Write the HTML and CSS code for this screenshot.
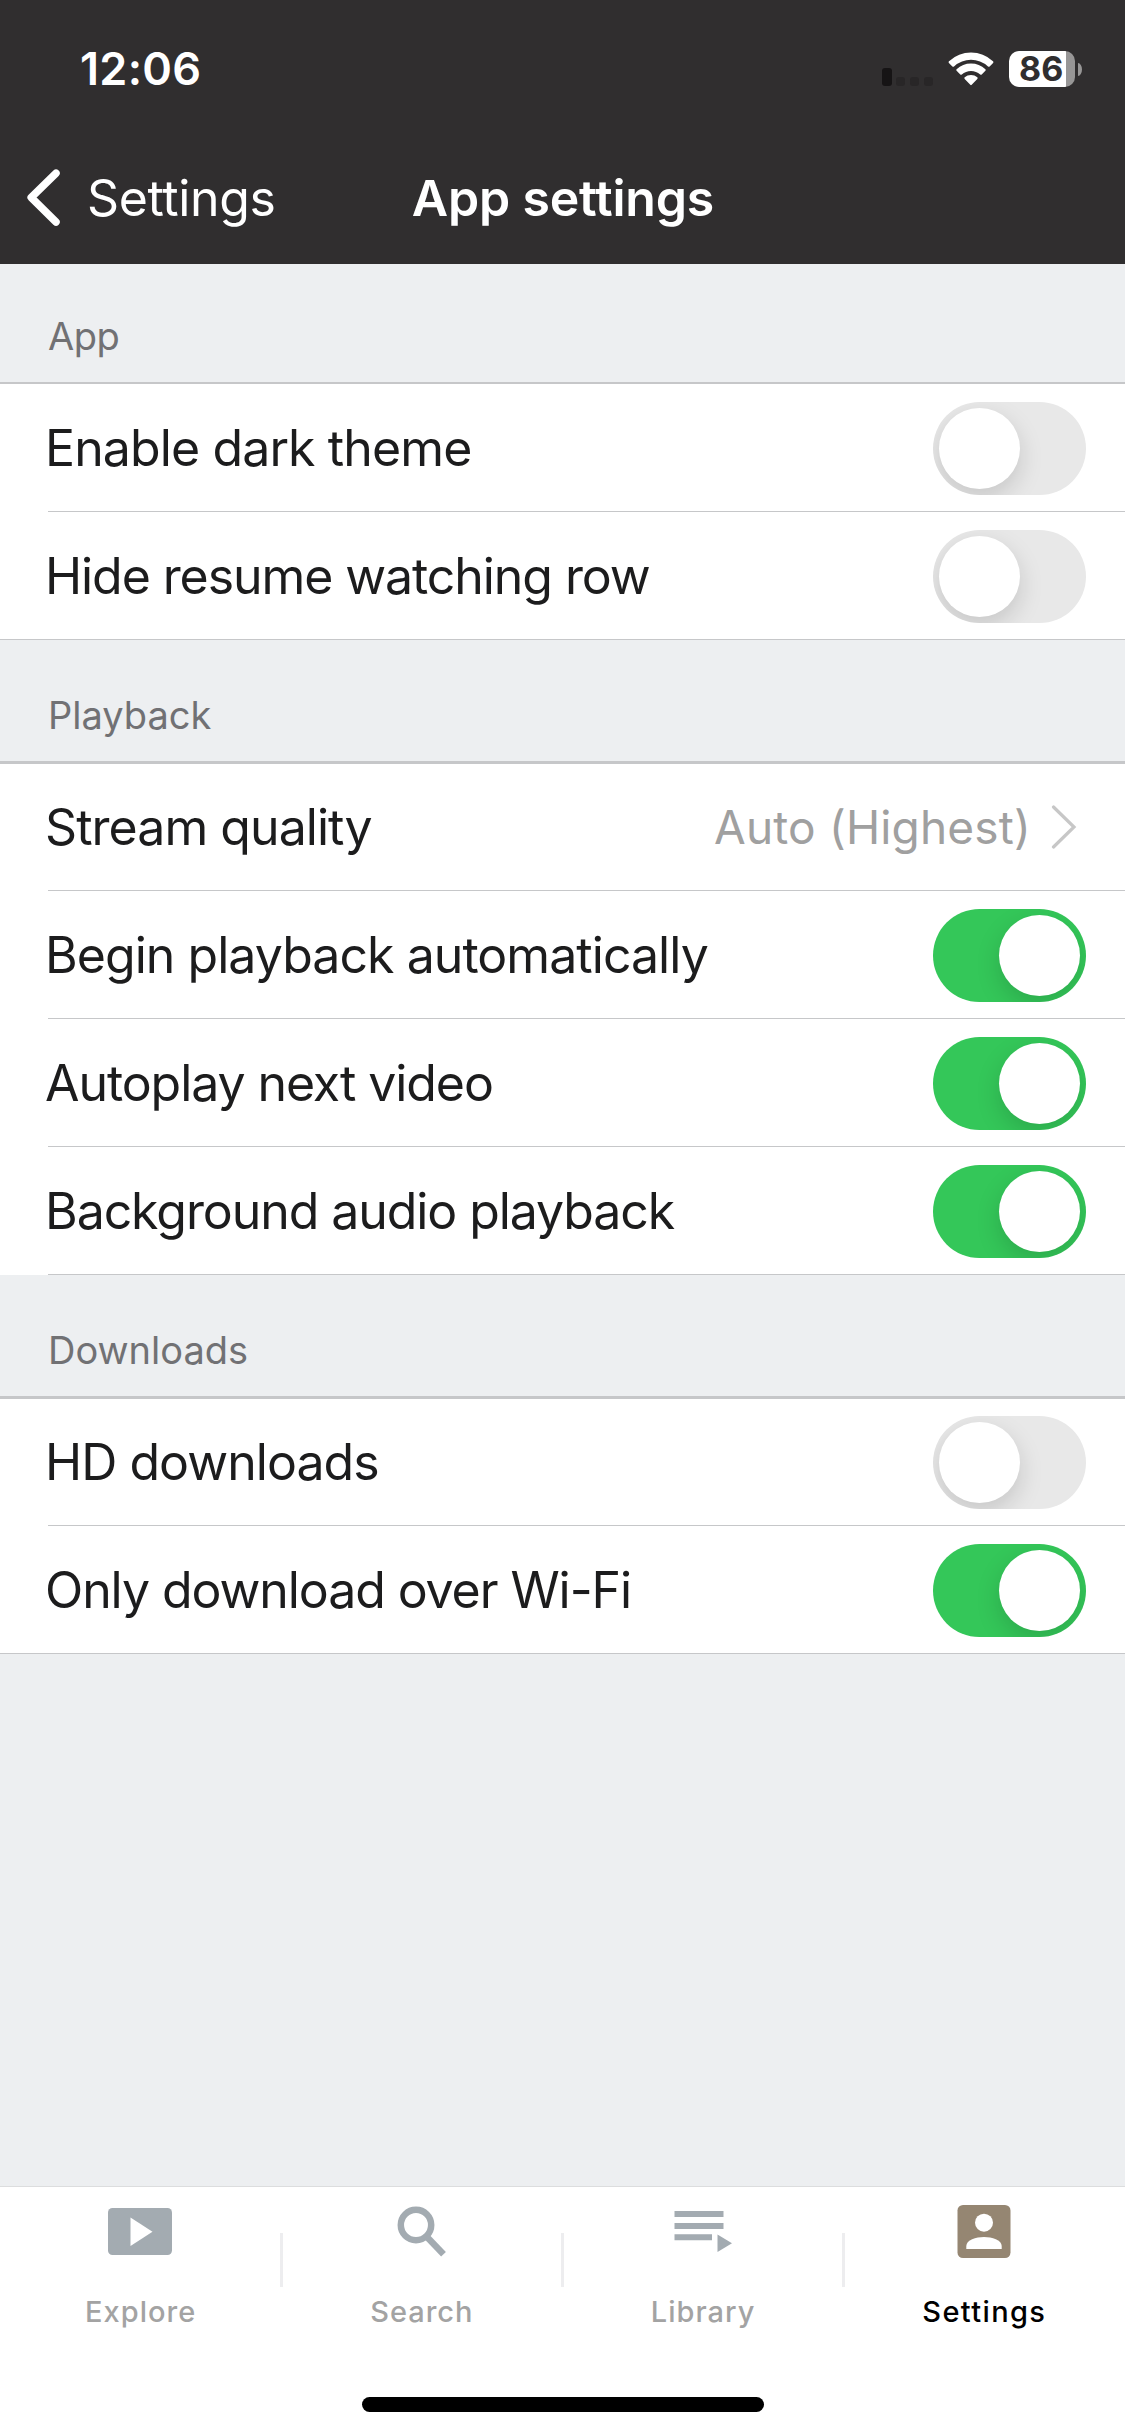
FILE: index.html
```html
<!DOCTYPE html>
<html lang="en">
<head>
<meta charset="utf-8">
<title>App settings</title>
<link rel="stylesheet" href="styles.css">
</head>
<body>
<div class="screen">
  <header class="top">
    <div class="status">
      <time class="clock">12:06</time>
      <div class="indicators">
        <div class="signal"><i class="bar-on"></i><i></i><i></i><i></i></div>
        <svg class="wifi" width="46" height="34" viewBox="0 0 46 34">
          <path fill="#fff" d="M1 9.2Q10.500 0.500 23 0.500Q35.500 0.500 45 9.200Q45.900 10 45.100 10.900L41.600 14.400Q40.800 15.100 40 14.400Q32.500 7.700 23 7.700Q13.500 7.700 6 14.400Q5.200 15.100 4.400 14.400L0.900 10.900Q0.100 10 1 9.200Z"/>
          <path fill="#fff" d="M8.600 17.200Q14.700 11.600 23 11.600Q31.300 11.600 37.400 17.200Q38.200 18 37.400 18.800L33.700 22.500Q33 23.100 32.200 22.500Q28.300 19 23 19Q17.700 19 13.800 22.500Q13 23.100 12.300 22.500L8.600 18.800Q7.800 18 8.600 17.200Z"/>
          <path fill="#fff" d="M16.700 25.300Q19.300 23 23 23Q26.700 23 29.300 25.300Q30.100 26 29.300 26.900L23.700 32.800Q23 33.500 22.300 32.800L16.700 26.900Q15.900 26 16.700 25.300Z"/>
        </svg>
        <div class="battery"><span class="level">86</span></div>
        <span class="nub"></span>
      </div>
    </div>
    <nav class="nav">
      <a class="back">
        <svg width="33" height="57" viewBox="0 0 33 57"><path d="M29 4.200 4.200 28.500 29 53" fill="none" stroke="#fff" stroke-width="7.500" stroke-linecap="round" stroke-linejoin="round"/></svg>
        <span>Settings</span>
      </a>
      <h1 class="title">App settings</h1>
    </nav>
  </header>

  <main class="content">
    <section>
      <h2 class="heading heading-first">App</h2>
      <div class="row"><span class="label roomy">Enable dark theme</span><span class="switch"><i></i></span></div>
      <div class="row last"><span class="label">Hide resume watching row</span><span class="switch"><i></i></span></div>
    </section>
    <section>
      <h2 class="heading">Playback</h2>
      <div class="row"><span class="label loose">Stream quality</span>
        <span class="value">Auto (Highest)
          <svg width="26" height="44" viewBox="0 0 26 44"><path d="M2.500 2 23 22 2.500 42" fill="none" stroke="#c7c7c7" stroke-width="3.200" stroke-linecap="round"/></svg>
        </span>
      </div>
      <div class="row"><span class="label loose">Begin playback automatically</span><span class="switch on"><i></i></span></div>
      <div class="row"><span class="label">Autoplay next video</span><span class="switch on"><i></i></span></div>
      <div class="row"><span class="label">Background audio playback</span><span class="switch on"><i></i></span></div>
    </section>
    <section>
      <h2 class="heading">Downloads</h2>
      <div class="row"><span class="label loose">HD downloads</span><span class="switch"><i></i></span></div>
      <div class="row last"><span class="label">Only download over Wi-Fi</span><span class="switch on"><i></i></span></div>
    </section>
  </main>

  <footer class="tabs">
    <a class="tab">
      <svg class="explore" width="64" height="56" viewBox="0 0 64 56"><rect y="4" width="64" height="47" rx="4.500" fill="#a3abb1"/><path d="M22.500 13.500 44.500 27.700 22.500 42Z" fill="#fff"/></svg>
      <span>Explore</span>
    </a>
    <span class="divider"></span>
    <a class="tab">
      <svg width="50" height="56" viewBox="0 0 50 56"><circle cx="19" cy="21" r="15.200" fill="none" stroke="#a3abb1" stroke-width="6.500"/><path d="M29.500 32.500 46.500 50.300" stroke="#a3abb1" stroke-width="6.600"/></svg>
      <span>Search</span>
    </a>
    <span class="divider"></span>
    <a class="tab">
      <svg width="58" height="56" viewBox="0 0 58 56"><path d="M.5 7h49v6H.5zM.5 19h49v6H.5zM.5 30.300h37.500v6H.5zM43.500 30.500 58 39.200 43.500 48z" fill="#a3abb1"/></svg>
      <span>Library</span>
    </a>
    <span class="divider"></span>
    <a class="tab active">
      <svg width="54" height="56" viewBox="0 0 54 56"><rect x=".5" y="1" width="53" height="53" rx="5.500" fill="#958672"/><circle cx="27" cy="18.700" r="9" fill="#fff"/><path d="M9.300 45v-3C9.300 36 19 33 27 33s17.700 3 17.700 9v3Z" fill="#fff"/></svg>
      <span>Settings</span>
    </a>
    <span class="home"></span>
  </footer>
</div>
</body>
</html>
```
FILE: styles.css
```css
* { box-sizing: border-box; }

body {
  margin: 0;
  font-family: Inter, "Liberation Sans", sans-serif;
  background: #edeff1;
}

.screen {
  display: flex;
  flex-direction: column;
  width: 1125px;
  height: 2436px;
  overflow: hidden;
}

/* Status bar and navigation */
.top {
  height: 264px;
  background: #302e2f;
  color: #fff;
}

.status {
  display: flex;
  align-items: center;
  justify-content: space-between;
  height: 138px;
  padding: 0 43px 0 80px;
}

.clock {
  font-size: 45px;
  line-height: 50px;
  font-weight: 600;
  letter-spacing: .28px;
}

.indicators { display: flex; align-items: center; }

.signal {
  display: flex;
  align-items: flex-end;
  gap: 4.500px;
  height: 33px;
  margin-right: 15px;
}

.signal i {
  width: 9.300px;
  height: 9px;
  border-radius: 3px;
  background: #282627;
}

.signal .bar-on { height: 18px; background: #161415; }

.wifi { margin-right: 15px; }

.battery {
  width: 66px;
  height: 36px;
  border-radius: 10px;
  background: linear-gradient(to right, #fff 57px, #979696 57px);
}

.level {
  display: block;
  padding-left: 10px;
  color: #302e2f;
  font-size: 34px;
  font-weight: 700;
  line-height: 36px;
}

.nub {
  width: 4px;
  height: 13px;
  margin-left: 3px;
  border-radius: 0 4px 4px 0 / 0 6.500px 6.500px 0;
  background: #979696;
}

.nav {
  display: grid;
  grid-template-columns: 1fr auto 1fr;
  align-items: center;
  height: 126px;
  padding: 0 0 7px 27px;
}

.back {
  display: flex;
  align-items: center;
  gap: 27px;
  font-size: 50px;
  letter-spacing: -.35px;
}

.title {
  margin: 0 26px 0 0;
  font-size: 50px;
  font-weight: 600;
  letter-spacing: -.19px;
}

/* Settings list */
.content { flex: 1; }

.heading {
  display: flex;
  align-items: flex-end;
  height: 124px;
  margin: 0;
  padding: 0 48px 26px;
  border-bottom: 3px solid #c6c7c9;
  color: #717174;
  font-size: 38px;
  font-weight: 400;
  line-height: 40px;
}

.heading-first {
  height: 120px;
  border-bottom-width: 2px;
  letter-spacing: -.44px;
}

.row {
  display: flex;
  align-items: center;
  justify-content: space-between;
  height: 128px;
  padding: 1px 39px 0 45px;
  background: linear-gradient(#c6c7c9, #c6c7c9) 48px 100% / 100% 1px no-repeat #fff;
  color: #1c1c1d;
}

.heading + .row { height: 127px; padding-top: 0; }
.heading-first + .row { height: 128px; padding-top: 1px; }
.row.last { background-position: 0 100%; }

.label {
  padding-bottom: 1px;
  font-size: 50px;
  line-height: 60px;
  letter-spacing: -1.080px;
}

.loose { letter-spacing: -.95px; }
.roomy { letter-spacing: -.88px; }

.switch {
  width: 153px;
  height: 93px;
  padding: 6px;
  border-radius: 47px;
  overflow: hidden;
  background: #e8e8e8;
}

.switch i {
  display: block;
  width: 81px;
  height: 81px;
  border-radius: 50%;
  background: #fff;
  box-shadow: 0 9px 24px rgba(0, 0, 0, .15);
}

.switch.on { background: #34c759; }
.switch.on i { margin-left: auto; }

.value {
  display: flex;
  align-items: center;
  gap: 20px;
  margin-right: 9px;
  padding-bottom: 1px;
  color: #a0a0a0;
  font-size: 46px;
  letter-spacing: .18px;
}

/* Tab bar */
.tabs {
  position: relative;
  display: flex;
  height: 250px;
  border-top: 1px solid #dcddde;
  background: #fff;
}

.tab {
  flex: 1;
  display: flex;
  flex-direction: column;
  align-items: center;
  gap: 34px;
  padding-top: 17px;
  color: #a3a3a3;
  font-size: 29px;
  font-weight: 500;
  line-height: 36px;
  letter-spacing: 1px;
}

.tab.active { color: #000; letter-spacing: 1.370px; }

.explore { margin-right: 2px; }

.divider {
  width: 3px;
  height: 54px;
  margin: 46px -1.500px 0;
  background: #ededef;
}

/* Home indicator floats over the tab bar */
.home {
  position: absolute;
  left: 50%;
  bottom: 24px;
  width: 402px;
  height: 15px;
  border-radius: 8px;
  background: #000;
  transform: translateX(-50%);
}
```
